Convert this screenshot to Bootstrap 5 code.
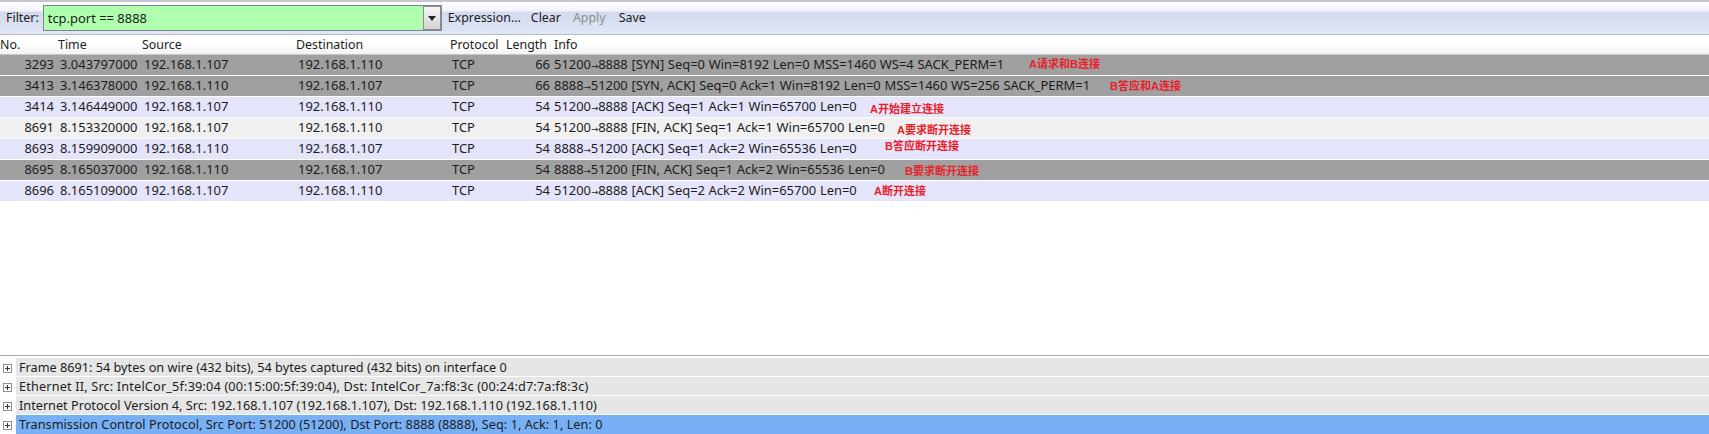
<!DOCTYPE html>
<html lang="zh">
<head>
<meta charset="UTF-8">
<title>Wireshark</title>
<link href="https://cdn.jsdelivr.net/npm/bootstrap@5.3.0/dist/css/bootstrap.min.css" rel="stylesheet">
<style>
body { margin:0; height:434px; overflow:hidden; background:#fff; color:#1c1c1c; font-family:"Noto Sans","Liberation Sans",sans-serif; font-size:12.95px; line-height:20px; }
.app { height:434px; }
.toolbar { height:35px; padding-top:1px; border-top:2px solid #c4c6d0; border-bottom:1px solid #b4bacb; background:linear-gradient(#fff 0,#f2f4fa 9px,#d3daee 10px,#e0e6f6 100%); padding-left:6px; font-size:12.4px; }
.filter-combo { width:399px; height:26px; margin-left:4px; border:1px solid #7d8794; background:#afffaf; padding-left:4px; font-size:12.95px; }
.combo-btn { width:18px; height:24px; background:linear-gradient(#f6f6f6,#d4d4d4); border:1px solid #8b8b8b; }
.combo-btn::after { content:""; border-left:4px solid transparent; border-right:4px solid transparent; border-top:5px solid #222; }
.filter-act { margin-left:6px; }
.is-off { color:#8d8d8d; margin-right:1px; }
.gap-act { gap:12px; margin-left:10px; }
.list-wrap { position:relative; height:322px; }
.pkt-table { table-layout:fixed; width:1709px; margin:0; font-size:12.95px; color:#1c1c1c; }
.pkt-table th, .pkt-table td { padding:0; font-weight:400; white-space:nowrap; background:transparent; color:inherit; box-shadow:none; border:0; }
.pkt-table thead th { height:20px; line-height:19px; font-size:12.4px; background:linear-gradient(#fff 50%,#f1f2f4); border-bottom:1px solid #c8c8c8; }
.pkt-table td { height:21px; line-height:19px; border-bottom:1px solid #fff; }
.pkt-table td:last-child { word-spacing:.3px; }
.pkt-table tbody tr { height:21px; }
.cell-num { text-align:right; padding-right:4px !important; }
.cell-time { padding-left:2px !important; }
.cell-addr { padding-left:2px !important; }
.head-len { padding-left:2px !important; }
.arrow { font-family:"DejaVu Sans",sans-serif; font-size:8.5px; line-height:1; }
.pkt-table .row-syn td { background:#a0a0a0; }
.pkt-table .row-ack td { background:#e4e4fb; }
.pkt-table .row-fin td { background:#f0f0f0; }
.note { position:absolute; color:#e8202a; font:700 11px/14px "Liberation Sans","Noto Sans CJK SC",sans-serif; white-space:nowrap; }
.n1 { left:1029px; top:22px; }
.n2 { left:1110px; top:44px; }
.n3 { left:870px; top:67px; }
.n4 { left:897px; top:88px; }
.n5 { left:885px; top:104px; }
.n6 { left:905px; top:129px; }
.n7 { left:874px; top:149px; }
.detail-pane { border-top:1px solid #a8a8a8; padding-top:2px; line-height:19px; font-size:12.7px; }
.tree-row { height:19px; }
.tree-icon { flex:0 0 16px; padding-left:3px; }
.tree-text { flex:1; background:#e6e6e6; padding-left:3px; height:18px; line-height:18px; }
.tree-wide { letter-spacing:.17px; }
.is-sel .tree-text { background:#78b0f5; height:19px; letter-spacing:.04px; }
</style>
</head>
<body>
<div class="app d-flex flex-column">
  <div class="toolbar d-flex align-items-center">
    <span>Filter:</span>
    <div class="filter-combo d-flex align-items-center justify-content-between">
      <span>tcp.port == 8888</span>
      <span class="combo-btn d-flex align-items-center justify-content-center"></span>
    </div>
    <span class="filter-act">Expression...</span>
    <div class="d-flex gap-act">
      <span>Clear</span><span class="is-off">Apply</span><span>Save</span>
    </div>
  </div>
  <div class="list-wrap">
    <table class="table table-borderless pkt-table">
      <colgroup><col style="width:58px"><col style="width:84px"><col style="width:154px"><col style="width:154px"><col style="width:54px"><col style="width:50px"><col></colgroup>
      <thead>
        <tr><th>No.</th><th>Time</th><th>Source</th><th>Destination</th><th>Protocol</th><th class="head-len">Length</th><th>Info</th></tr>
      </thead>
      <tbody>
        <tr class="row-syn"><td class="cell-num">3293</td><td class="cell-time">3.043797000</td><td class="cell-addr">192.168.1.107</td><td class="cell-addr">192.168.1.110</td><td class="cell-addr">TCP</td><td class="cell-num">66</td><td>51200<span class="arrow">→</span>8888 [SYN] Seq=0 Win=8192 Len=0 MSS=1460 WS=4 SACK_PERM=1</td></tr>
        <tr class="row-syn"><td class="cell-num">3413</td><td class="cell-time">3.146378000</td><td class="cell-addr">192.168.1.110</td><td class="cell-addr">192.168.1.107</td><td class="cell-addr">TCP</td><td class="cell-num">66</td><td>8888<span class="arrow">→</span>51200 [SYN, ACK] Seq=0 Ack=1 Win=8192 Len=0 MSS=1460 WS=256 SACK_PERM=1</td></tr>
        <tr class="row-ack"><td class="cell-num">3414</td><td class="cell-time">3.146449000</td><td class="cell-addr">192.168.1.107</td><td class="cell-addr">192.168.1.110</td><td class="cell-addr">TCP</td><td class="cell-num">54</td><td>51200<span class="arrow">→</span>8888 [ACK] Seq=1 Ack=1 Win=65700 Len=0</td></tr>
        <tr class="row-fin"><td class="cell-num">8691</td><td class="cell-time">8.153320000</td><td class="cell-addr">192.168.1.107</td><td class="cell-addr">192.168.1.110</td><td class="cell-addr">TCP</td><td class="cell-num">54</td><td>51200<span class="arrow">→</span>8888 [FIN, ACK] Seq=1 Ack=1 Win=65700 Len=0</td></tr>
        <tr class="row-ack"><td class="cell-num">8693</td><td class="cell-time">8.159909000</td><td class="cell-addr">192.168.1.110</td><td class="cell-addr">192.168.1.107</td><td class="cell-addr">TCP</td><td class="cell-num">54</td><td>8888<span class="arrow">→</span>51200 [ACK] Seq=1 Ack=2 Win=65536 Len=0</td></tr>
        <tr class="row-syn"><td class="cell-num">8695</td><td class="cell-time">8.165037000</td><td class="cell-addr">192.168.1.110</td><td class="cell-addr">192.168.1.107</td><td class="cell-addr">TCP</td><td class="cell-num">54</td><td>8888<span class="arrow">→</span>51200 [FIN, ACK] Seq=1 Ack=2 Win=65536 Len=0</td></tr>
        <tr class="row-ack"><td class="cell-num">8696</td><td class="cell-time">8.165109000</td><td class="cell-addr">192.168.1.107</td><td class="cell-addr">192.168.1.110</td><td class="cell-addr">TCP</td><td class="cell-num">54</td><td>51200<span class="arrow">→</span>8888 [ACK] Seq=2 Ack=2 Win=65700 Len=0</td></tr>
      </tbody>
    </table>
    <div class="note-layer">
      <span class="note n1">A请求和B连接</span>
      <span class="note n2">B答应和A连接</span>
      <span class="note n3">A开始建立连接</span>
      <span class="note n4">A要求断开连接</span>
      <span class="note n5">B答应断开连接</span>
      <span class="note n6">B要求断开连接</span>
      <span class="note n7">A断开连接</span>
    </div>
  </div>
  <div class="detail-pane flex-grow-1">
    <div class="tree-row d-flex"><span class="tree-icon"><svg width="9" height="9" viewBox="0 0 9 9"><rect x=".5" y=".5" width="8" height="8" fill="#fff" stroke="#919191"/><path d="M2 4.5h5M4.5 2v5" stroke="#333"/></svg></span><span class="tree-text">Frame 8691: 54 bytes on wire (432 bits), 54 bytes captured (432 bits) on interface 0</span></div>
    <div class="tree-row d-flex"><span class="tree-icon"><svg width="9" height="9" viewBox="0 0 9 9"><rect x=".5" y=".5" width="8" height="8" fill="#fff" stroke="#919191"/><path d="M2 4.5h5M4.5 2v5" stroke="#333"/></svg></span><span class="tree-text tree-wide">Ethernet II, Src: IntelCor_5f:39:04 (00:15:00:5f:39:04), Dst: IntelCor_7a:f8:3c (00:24:d7:7a:f8:3c)</span></div>
    <div class="tree-row d-flex"><span class="tree-icon"><svg width="9" height="9" viewBox="0 0 9 9"><rect x=".5" y=".5" width="8" height="8" fill="#fff" stroke="#919191"/><path d="M2 4.5h5M4.5 2v5" stroke="#333"/></svg></span><span class="tree-text">Internet Protocol Version 4, Src: 192.168.1.107 (192.168.1.107), Dst: 192.168.1.110 (192.168.1.110)</span></div>
    <div class="tree-row d-flex is-sel"><span class="tree-icon"><svg width="9" height="9" viewBox="0 0 9 9"><rect x=".5" y=".5" width="8" height="8" fill="#fff" stroke="#919191"/><path d="M2 4.5h5M4.5 2v5" stroke="#333"/></svg></span><span class="tree-text">Transmission Control Protocol, Src Port: 51200 (51200), Dst Port: 8888 (8888), Seq: 1, Ack: 1, Len: 0</span></div>
  </div>
</div>
<script src="https://cdn.jsdelivr.net/npm/bootstrap@5.3.0/dist/js/bootstrap.bundle.min.js"></script>
</body>
</html>
